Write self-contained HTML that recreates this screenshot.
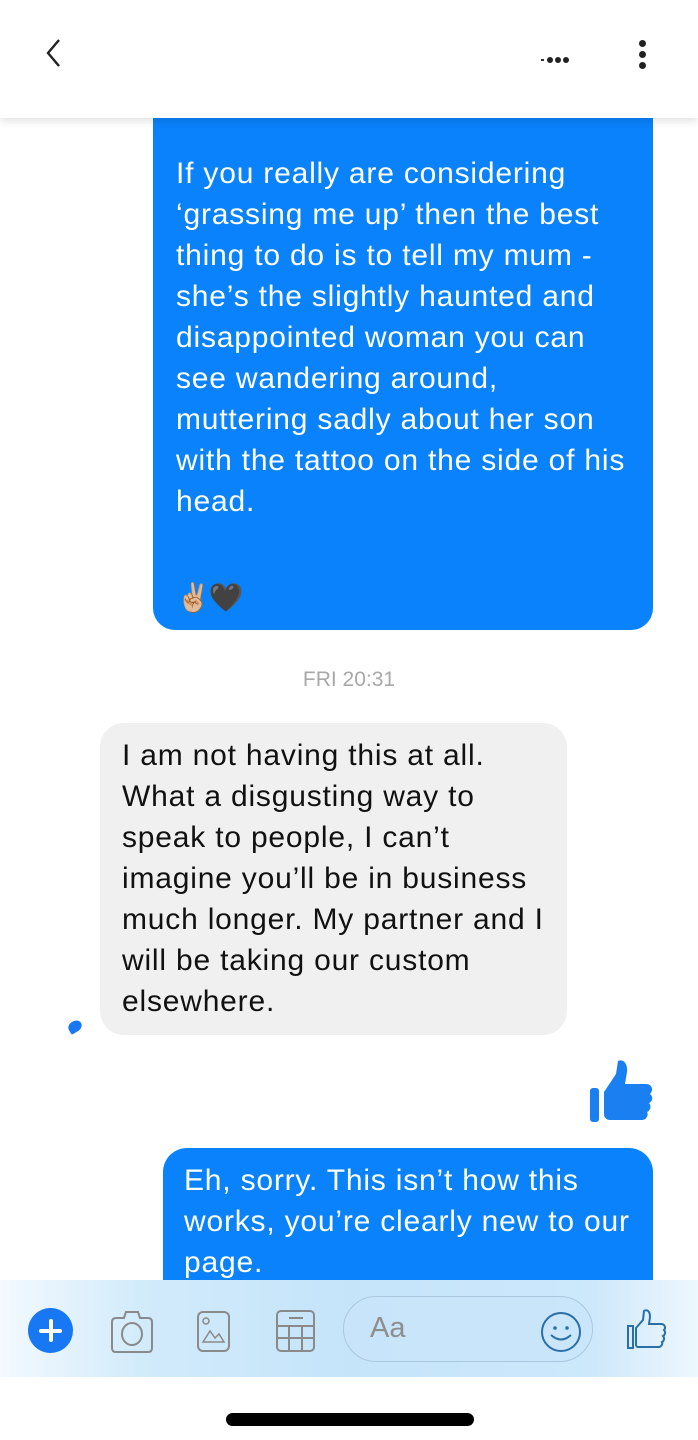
<!DOCTYPE html>
<html><head><meta charset="utf-8"><style>
*{margin:0;padding:0;box-sizing:border-box}
body{width:698px;height:1440px;background:#fff;position:relative;overflow:hidden;font-family:"Liberation Sans",Arial,sans-serif}
.hdr{position:absolute;left:0;top:0;width:698px;height:118px;background:#fff;box-shadow:0 3px 8px rgba(0,0,0,0.12);z-index:5}
.b{position:absolute;background:#0a82fb}
.t{position:absolute;font-size:30px;letter-spacing:0.8px;white-space:nowrap;line-height:41px}
.w{color:#fff}.k{color:#111}
</style></head><body>
<div class="hdr">
<svg style="position:absolute;left:44px;top:38px" width="20" height="30"><path d="M15 2 L4 15 L15 28" stroke="#222" stroke-width="2.4" fill="none"/></svg>
<div style="position:absolute;left:541px;top:57px;width:32px;height:6px">
<span style="position:absolute;left:0;top:2px;width:3px;height:2px;background:#333"></span>
<span style="position:absolute;left:6px;top:0;width:6px;height:6px;border-radius:3px;background:#222"></span>
<span style="position:absolute;left:14px;top:0;width:6px;height:6px;border-radius:3px;background:#222"></span>
<span style="position:absolute;left:22px;top:0;width:6px;height:6px;border-radius:3px;background:#222"></span></div>
<div style="position:absolute;left:639px;top:40px">
<div style="width:7px;height:7px;border-radius:4px;background:#222;margin-bottom:4px"></div>
<div style="width:7px;height:7px;border-radius:4px;background:#222;margin-bottom:4px"></div>
<div style="width:7px;height:7px;border-radius:4px;background:#222"></div></div>
</div>

<div class="b" style="left:153px;top:90px;width:500px;height:540px;border-radius:22px"></div>
<div class="t w" style="left:176px;top:153px">If you really are considering</div>
<div class="t w" style="left:176px;top:194px">‘grassing me up’ then the best</div>
<div class="t w" style="left:176px;top:235px">thing to do is to tell my mum -</div>
<div class="t w" style="left:176px;top:276px">she’s the slightly haunted and</div>
<div class="t w" style="left:176px;top:317px">disappointed woman you can</div>
<div class="t w" style="left:176px;top:358px">see wandering around,</div>
<div class="t w" style="left:176px;top:399px">muttering sadly about her son</div>
<div class="t w" style="left:176px;top:440px">with the tattoo on the side of his</div>
<div class="t w" style="left:176px;top:481px">head.</div>
<div class="t" style="left:176px;top:577px;font-size:28px;letter-spacing:-2px">✌🏼🖤</div>

<div style="position:absolute;left:0;width:698px;top:668px;text-align:center;font-size:21px;color:#a8a8a8">FRI 20:31</div>

<div class="b" style="left:100px;top:723px;width:467px;height:312px;border-radius:24px;background:#f0f0f0"></div>
<div class="t k" style="left:122px;top:735px">I am not having this at all.</div>
<div class="t k" style="left:122px;top:776px">What a disgusting way to</div>
<div class="t k" style="left:122px;top:817px">speak to people, I can’t</div>
<div class="t k" style="left:122px;top:858px">imagine you’ll be in business</div>
<div class="t k" style="left:122px;top:899px">much longer. My partner and I</div>
<div class="t k" style="left:122px;top:940px">will be taking our custom</div>
<div class="t k" style="left:122px;top:981px">elsewhere.</div>
<div style="position:absolute;left:68px;top:1021px;width:14px;height:11px;border-radius:50% 50% 50% 10%;background:#1877f2;transform:rotate(-30deg)"></div>

<svg style="position:absolute;left:588px;top:1058px" width="66" height="66" viewBox="0 0 66 66"><rect x="2" y="30" width="9" height="34" rx="3" fill="#1a7ff0"/><path d="M16 34 L28 16 L30 3 C34 1 40 4 39 14 L37 26 L58 26 C64 26 66 32 62 36 C66 39 64 44 61 45 C64 48 62 53 59 54 C61 57 58 62 54 62 L22 62 C18 62 16 59 16 56 Z" fill="#1a7ff0"/></svg>

<div class="b" style="left:163px;top:1148px;width:490px;height:200px;border-radius:24px"></div>
<div class="t w" style="left:184px;top:1160px">Eh, sorry. This isn’t how this</div>
<div class="t w" style="left:184px;top:1201px">works, you’re clearly new to our</div>
<div class="t w" style="left:184px;top:1242px">page.</div>

<div style="position:absolute;left:0;top:1280px;width:698px;height:97px;background:linear-gradient(90deg,#f3f9fe 0%,#d2ebfb 20%,#c5e4fa 50%,#cde8fb 85%,#eef7fe 100%)"></div>
<div style="position:absolute;left:0;top:1377px;width:698px;height:63px;background:#fff"></div>
<div style="position:absolute;left:28px;top:1308px;width:45px;height:45px;border-radius:50%;background:#1877f2"></div>
<div style="position:absolute;left:39px;top:1329px;width:23px;height:4px;background:#fff;border-radius:2px"></div>
<div style="position:absolute;left:49px;top:1319px;width:4px;height:23px;background:#fff;border-radius:2px"></div>
<svg style="position:absolute;left:108px;top:1310px" width="48" height="44"><path d="M4 12 Q4 8 8 8 L16 8 L18 2 L30 2 L32 8 L40 8 Q44 8 44 12 L44 38 Q44 42 40 42 L8 42 Q4 42 4 38 Z" fill="none" stroke="#8a8a8a" stroke-width="2"/><ellipse cx="24" cy="24" rx="10" ry="11" fill="none" stroke="#8a8a8a" stroke-width="2"/></svg>
<svg style="position:absolute;left:196px;top:1310px" width="36" height="44"><rect x="2" y="2" width="31" height="39" rx="5" fill="none" stroke="#8a8a8a" stroke-width="2"/><circle cx="10" cy="11" r="3" fill="none" stroke="#8a8a8a" stroke-width="1.5"/><path d="M7 32 L14 21 L19 28 L23 24 L28 32 Z" fill="none" stroke="#8a8a8a" stroke-width="1.5"/></svg>
<svg style="position:absolute;left:275px;top:1309px" width="42" height="44"><rect x="2" y="2" width="37" height="40" rx="4" fill="none" stroke="#8a8a8a" stroke-width="2"/><path d="M14 9 H28 M2 17 H39 M2 29 H39 M14 17 V42 M27 17 V42" stroke="#8a8a8a" stroke-width="2"/></svg>
<div style="position:absolute;left:343px;top:1296px;width:250px;height:66px;border-radius:33px;border:1.5px solid #a9c8e0;background:rgba(200,228,250,0.6)"></div>
<div style="position:absolute;left:370px;top:1312px;font-size:29px;color:#8e8e8e">Aa</div>
<svg style="position:absolute;left:539px;top:1310px" width="44" height="44"><circle cx="22" cy="22" r="19" fill="none" stroke="#2a6fa8" stroke-width="2"/><circle cx="16" cy="18" r="1.8" fill="#2a6fa8"/><circle cx="28" cy="18" r="1.8" fill="#2a6fa8"/><path d="M12 25 Q22 34 32 25" fill="none" stroke="#2a6fa8" stroke-width="2"/></svg>
<svg style="position:absolute;left:626px;top:1308px" width="42" height="42"><rect x="2" y="18" width="5" height="22" fill="none" stroke="#2a6fa8" stroke-width="2"/><path d="M10 20 L17 12 L18 3 C21 1 24 3 24 9 L23 16 L35 16 C39 16 40 20 38 22 C40 24 39 27 37 28 C39 30 38 33 36 34 C37 36 35 39 33 39 L12 39 C11 39 10 38 10 37 Z" fill="none" stroke="#2a6fa8" stroke-width="2"/></svg>
<div style="position:absolute;left:226px;top:1413px;width:248px;height:13px;border-radius:7px;background:#000"></div>
</body></html>
